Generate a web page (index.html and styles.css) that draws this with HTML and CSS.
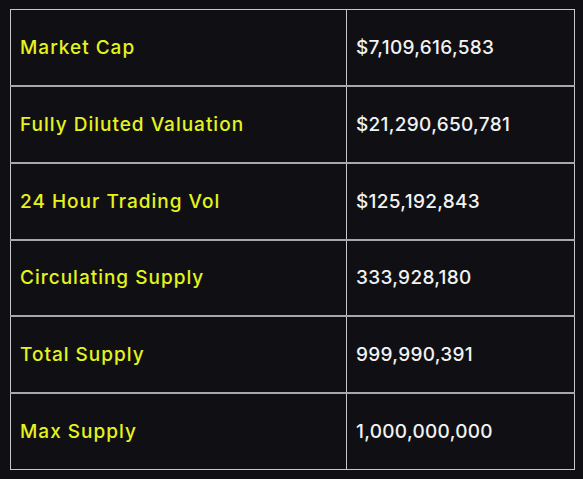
FILE: index.html
```
<!DOCTYPE html>
<html>
<head>
<meta charset="utf-8">
<link rel="stylesheet" href="styles.css">
</head>
<body>
<table class="stats">
  <tr><td class="label">Market Cap</td><td class="value">$7,109,616,583</td></tr>
  <tr><td class="label">Fully Diluted Valuation</td><td class="value">$21,290,650,781</td></tr>
  <tr><td class="label">24 Hour Trading Vol</td><td class="value">$125,192,843</td></tr>
  <tr><td class="label">Circulating Supply</td><td class="value">333,928,180</td></tr>
  <tr><td class="label">Total Supply</td><td class="value">999,990,391</td></tr>
  <tr><td class="label">Max Supply</td><td class="value">1,000,000,000</td></tr>
</table>
</body>
</html>
```
FILE: styles.css
```
html, body {
  margin: 0;
  background: #101014;
}
body {
  padding: 9px 9px 0 10px;
  font-family: Inter, "Open Sans", sans-serif;
}
.stats {
  border-collapse: collapse;
  width: 565px;
  border: 1px solid #c8c8c8;
}
.stats tr {
  height: 76.7px;
}
.stats td {
  border-top: 2px solid #a8a8a8;
  padding: 0 0 0 9px;
  font-size: 19px;
  font-weight: 500;
  vertical-align: middle;
}
.stats tr:first-child td {
  border-top: 1px solid #c8c8c8;
}
.label {
  width: 326px;
  color: #e4f41c;
  letter-spacing: 1px;
  border-right: 1px solid #c8c8c8;
}
.value {
  color: #f2f2f2;
  letter-spacing: 0.3px;
}
```
